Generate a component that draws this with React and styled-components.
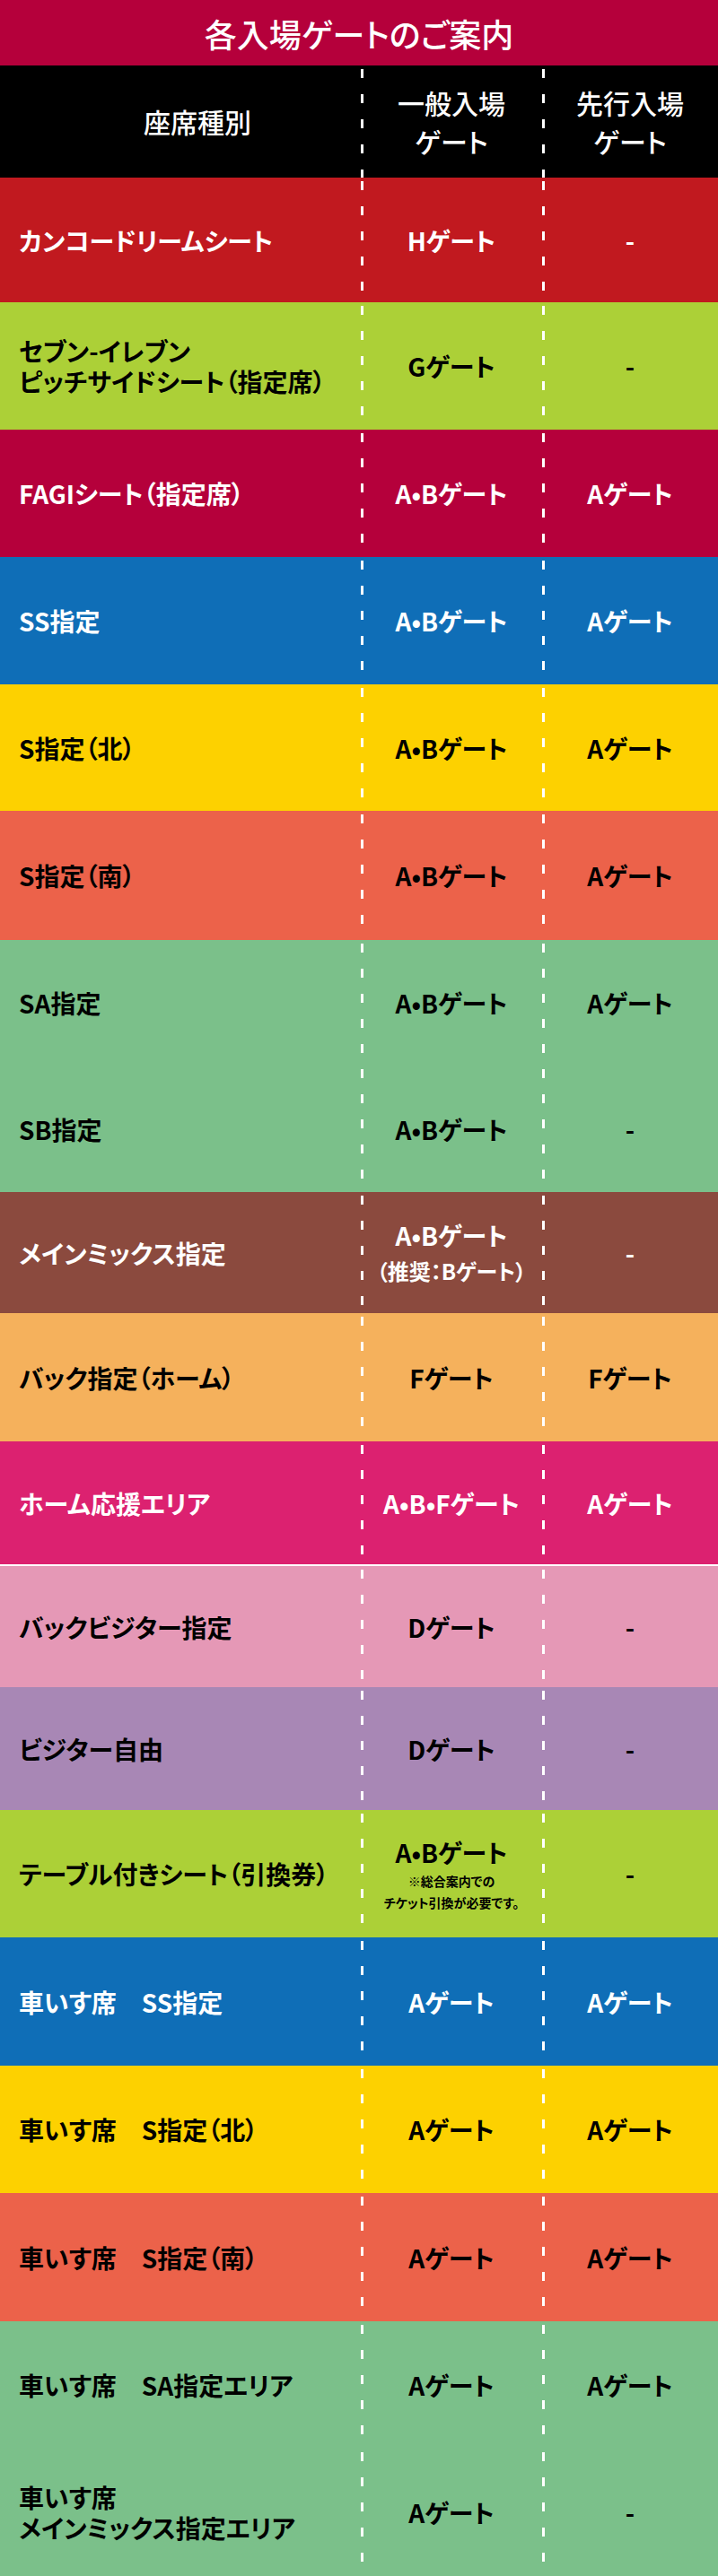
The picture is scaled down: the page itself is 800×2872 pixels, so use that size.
import React from 'react';
import styled, { createGlobalStyle } from 'styled-components';

const GlobalStyle = createGlobalStyle`
  html, body {
    margin: 0;
    padding: 0;
    background: #ffffff;
  }
  body {
    font-family: "Noto Sans CJK JP", "Noto Sans", sans-serif;
    font-feature-settings: "palt" 1;
  }
`;

const dash = `
  background-image: repeating-linear-gradient(to bottom, #ffffff 0 10px, transparent 10px 28px);
  background-size: 3px 100%;
  background-repeat: no-repeat;
  background-position: 0 4px;
`;

const Page = styled.div`
  width: 800px;
`;

const Title = styled.h1`
  margin: 0;
  height: 73px;
  display: flex;
  align-items: center;
  justify-content: center;
  background: #b5003b;
  color: #ffffff;
  font-size: 36px;
  font-weight: 500;
  letter-spacing: 0;
`;

const Row = styled.div`
  display: grid;
  grid-template-columns: 402px 202px 1fr;
  height: ${p => p.h}px;
  background: ${p => p.bg};
  color: ${p => p.fg};
  box-sizing: border-box;
  border-top: ${p => (p.line ? '2px solid #ffffff' : 'none')};
`;

const HeadCell = styled.div`
  display: flex;
  align-items: center;
  justify-content: center;
  text-align: center;
  font-size: 30px;
  font-weight: 500;
  line-height: 43px;
  padding-left: ${p => (p.first ? '38px' : '0')};
  ${p => (p.first ? '' : dash)}
`;

const NameCell = styled.div`
  display: flex;
  align-items: center;
  padding-left: 21px;
  font-size: 28px;
  font-weight: 700;
  line-height: 34px;
  white-space: pre;
`;

const GateCell = styled.div`
  display: flex;
  flex-direction: column;
  align-items: center;
  justify-content: center;
  text-align: center;
  font-size: 28px;
  font-weight: 700;
  line-height: 40px;
  ${dash}
`;

const SubLine = styled.span`
  font-size: 24px;
  line-height: 40px;
  font-weight: 700;
`;

const Note = styled.span`
  font-size: 14px;
  line-height: 24px;
  font-weight: 700;
`;

const CRIMSON = '#b5003b';
const RED = '#c1191f';
const LIME = '#acd037';
const BLUE = '#0f6eb7';
const YELLOW = '#fdd100';
const CORAL = '#ec624a';
const GREEN = '#7bc08a';
const BROWN = '#8b4a3e';
const ORANGE = '#f5b15c';
const MAGENTA = '#dc2170';
const PINK = '#e598b6';
const PURPLE = '#a887b5';

const W = '#ffffff';
const B = '#000000';

const rows = [
  { name: 'カンコードリームシート', gate: 'Hゲート', early: '-', bg: RED, fg: W, h: 139 },
  { name: 'セブン-イレブン\nピッチサイドシート（指定席）', gate: 'Gゲート', early: '-', bg: LIME, fg: B, h: 142 },
  { name: 'FAGIシート（指定席）', gate: 'A•Bゲート', early: 'Aゲート', bg: CRIMSON, fg: W, h: 142 },
  { name: 'SS指定', gate: 'A•Bゲート', early: 'Aゲート', bg: BLUE, fg: W, h: 142 },
  { name: 'S指定（北）', gate: 'A•Bゲート', early: 'Aゲート', bg: YELLOW, fg: B, h: 141 },
  { name: 'S指定（南）', gate: 'A•Bゲート', early: 'Aゲート', bg: CORAL, fg: B, h: 144 },
  { name: 'SA指定', gate: 'A•Bゲート', early: 'Aゲート', bg: GREEN, fg: B, h: 140 },
  { name: 'SB指定', gate: 'A•Bゲート', early: '-', bg: GREEN, fg: B, h: 141 },
  { name: 'メインミックス指定', gate: 'A•Bゲート', sub: '（推奨：Bゲート）', early: '-', bg: BROWN, fg: W, h: 135 },
  { name: 'バック指定（ホーム）', gate: 'Fゲート', early: 'Fゲート', bg: ORANGE, fg: B, h: 143 },
  { name: 'ホーム応援エリア', gate: 'A•B•Fゲート', early: 'Aゲート', bg: MAGENTA, fg: W, h: 137 },
  { name: 'バックビジター指定', gate: 'Dゲート', early: '-', bg: PINK, fg: B, h: 137, line: true },
  { name: 'ビジター自由', gate: 'Dゲート', early: '-', bg: PURPLE, fg: B, h: 137 },
  { name: 'テーブル付きシート（引換券）', gate: 'A•Bゲート', note: ['※総合案内での', 'チケット引換が必要です。'], early: '-', bg: LIME, fg: B, h: 142 },
  { name: '車いす席　SS指定', gate: 'Aゲート', early: 'Aゲート', bg: BLUE, fg: W, h: 143 },
  { name: '車いす席　S指定（北）', gate: 'Aゲート', early: 'Aゲート', bg: YELLOW, fg: B, h: 142 },
  { name: '車いす席　S指定（南）', gate: 'Aゲート', early: 'Aゲート', bg: CORAL, fg: B, h: 143 },
  { name: '車いす席　SA指定エリア', gate: 'Aゲート', early: 'Aゲート', bg: GREEN, fg: B, h: 142 },
  { name: '車いす席\nメインミックス指定エリア', gate: 'Aゲート', early: '-', bg: GREEN, fg: B, h: 142 },
];

function GateRow({ r }) {
  return (
    <Row h={r.h} bg={r.bg} fg={r.fg} line={r.line}>
      <NameCell>{r.name}</NameCell>
      <GateCell>
        <span>{r.gate}</span>
        {r.sub && <SubLine>{r.sub}</SubLine>}
        {r.note && r.note.map(n => <Note key={n}>{n}</Note>)}
      </GateCell>
      <GateCell>{r.early}</GateCell>
    </Row>
  );
}

export default function App() {
  return (
    <Page>
      <GlobalStyle />
      <Title>各入場ゲートのご案内</Title>
      <Row h={125} bg="#000000" fg="#ffffff">
        <HeadCell first>座席種別</HeadCell>
        <HeadCell>一般入場<br />ゲート</HeadCell>
        <HeadCell>先行入場<br />ゲート</HeadCell>
      </Row>
      {rows.map((r, i) => (
        <GateRow key={i} r={r} />
      ))}
    </Page>
  );
}
